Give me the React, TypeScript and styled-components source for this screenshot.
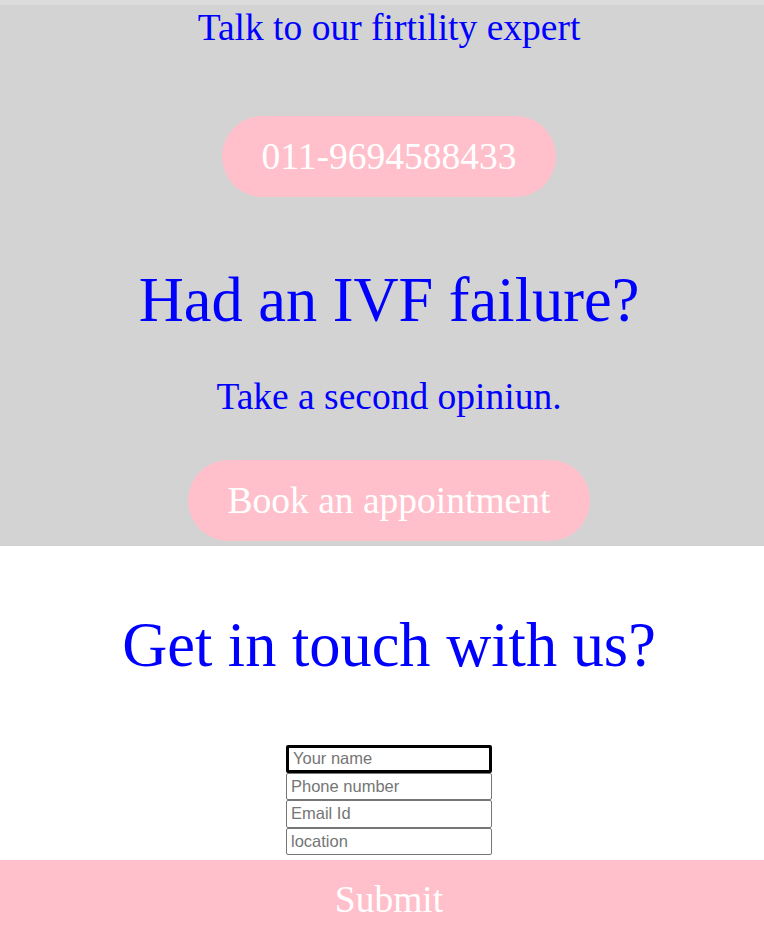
import styled, { createGlobalStyle } from 'styled-components'

const GlobalStyle = createGlobalStyle`
  html, body {
    overflow-x: hidden;
  }
  body {
    margin: 0;
    font-family: "Liberation Serif", "Times New Roman", serif;
    background: #fff;
  }
`

// page content is a bit wider than the window, so it sits right of center
const Page = styled.div`
  width: 778px;
`

const TopStrip = styled.div`
  height: 5px;
  background: #dcdcdc;
`

const Hero = styled.section`
  background-color: lightgray;
  display: flex;
  flex-direction: column;
  align-items: center;
  padding-bottom: 5px;
`

const Tagline = styled.p`
  margin: 0;
  color: blue;
  font-size: 37.5px;
  line-height: 46px;
`

const PillButton = styled.button<{ $top: number }>`
  margin-top: ${p => p.$top}px;
  background: pink;
  color: white;
  border: none;
  border-radius: 41px;
  padding: 19px 40px;
  font-family: inherit;
  font-size: 37.5px;
  line-height: 43px;
  cursor: pointer;
`

const BigTitle = styled.h1<{ $top: number }>`
  margin: ${p => p.$top}px 0 0;
  color: blue;
  font-weight: normal;
  font-size: 62.4px;
  line-height: 71px;
  text-align: center;
`

const Subtitle = styled.p`
  margin: 40px 0 0;
  color: blue;
  font-size: 37.5px;
  line-height: 44px;
`

const Contact = styled.section`
  display: flex;
  flex-direction: column;
  align-items: center;
`

const Form = styled.form`
  display: flex;
  flex-direction: column;
  align-items: center;
  width: 100%;
  margin-top: 65px;
`

const Field = styled.input<{ $active?: boolean }>`
  box-sizing: border-box;
  width: 206px;
  height: 27.5px;
  margin: 0;
  padding: 0 4px;
  border: ${p => (p.$active ? '3px solid #000' : '1px solid #767676')};
  border-radius: 2px;
  font-family: "Liberation Sans", Arial, sans-serif;
  font-size: 16.5px;
  outline: none;
  &::placeholder {
    color: #757575;
  }
`

const SubmitBar = styled.button`
  margin-top: 5px;
  width: 100%;
  height: 78px;
  border: none;
  background: pink;
  color: white;
  font-family: inherit;
  font-size: 37.5px;
  cursor: pointer;
`

export default function App() {
  return (
    <Page>
      <GlobalStyle />
      <TopStrip />
      <Hero>
        <Tagline>Talk to our firtility expert</Tagline>
        <PillButton $top={65}>011-9694588433</PillButton>
        <BigTitle $top={67}>Had an IVF failure?</BigTitle>
        <Subtitle>Take a second opiniun.</Subtitle>
        <PillButton $top={41}>Book an appointment</PillButton>
      </Hero>
      <Contact>
        <BigTitle $top={63}>Get in touch with us?</BigTitle>
        <Form onSubmit={e => e.preventDefault()}>
          <Field $active placeholder="Your name" />
          <Field placeholder="Phone number" />
          <Field placeholder="Email Id" />
          <Field placeholder="location" />
          <SubmitBar type="submit">Submit</SubmitBar>
        </Form>
      </Contact>
    </Page>
  )
}
